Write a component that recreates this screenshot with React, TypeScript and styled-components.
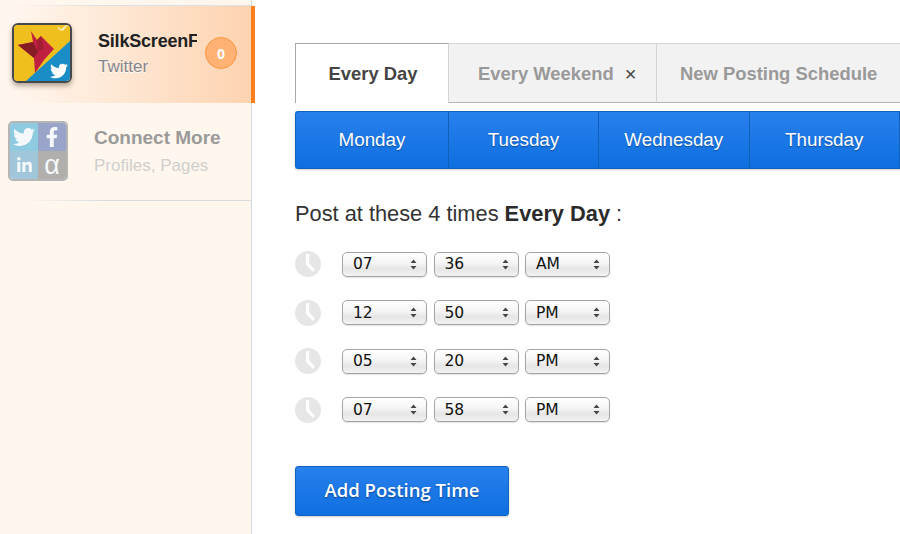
import React from "react";
import styled, { createGlobalStyle } from "styled-components";
import { FaTwitter, FaFacebookF, FaLinkedinIn } from "react-icons/fa";

const GlobalStyle = createGlobalStyle`
  html, body {
    margin: 0;
    padding: 0;
    background: #fff;
    overflow: hidden;
  }
  * {
    box-sizing: border-box;
  }
`;

const Page = styled.div`
  display: flex;
  width: 900px;
  height: 534px;
  overflow: hidden;
  font-family: "Liberation Sans", Arial, sans-serif;
`;
const Sidebar = styled.aside`
  flex: 0 0 252px;
  padding-top: 5px;
  background: #fff6ee;
  border-right: 1px solid #d5d8da;
`;
const TopLine = styled.div`
  height: 1px;
  background: linear-gradient(to right, #fff6ee 5%, #dce0e3 40%);
`;
const ActiveRow = styled.div`
  position: relative;
  display: flex;
  height: 97px;
  padding: 17px 0 0 12px;
  background: linear-gradient(to right, #fff6ee 5%, #fee6d2 50%, #fdd3b0 100%);
  &::after {
    content: "";
    position: absolute;
    top: 0;
    right: -4px;
    bottom: 0;
    width: 4px;
    background: #fd7e1f;
  }
`;
const ConnectRow = styled.div`
  display: flex;
  height: 98px;
  padding: 18px 0 0 8px;
  border-bottom: 1px solid transparent;
  border-image: linear-gradient(to right, #fff6ee 10%, #d9dde0 40%) 1;
`;
const Avatar = styled.div`
  flex: 0 0 60px;
  width: 60px;
  height: 60px;
  border: 2px solid #45494c;
  border-radius: 6px;
  overflow: hidden;
  box-shadow: 0 3px 5px rgba(90, 70, 50, 0.45);
  svg {
    display: block;
  }
`;
const IconGrid = styled.div`
  flex: 0 0 60px;
  display: grid;
  grid-template-columns: 1fr 1fr;
  grid-template-rows: 1fr 1fr;
  width: 60px;
  height: 60px;
  border: 2px solid #b5b5b3;
  border-radius: 5px;
  overflow: hidden;
`;
const IconCell = styled.div<{ $bg: string }>`
  display: flex;
  align-items: center;
  justify-content: center;
  background: ${(p) => p.$bg};
  color: #f4f8fa;
  font-size: 19px;
`;
const AlphaGlyph = styled.span`
  font-size: 27px;
  line-height: 27px;
  margin-top: 1px;
`;
const ProfileText = styled.div`
  width: 99px;
  margin: 7px 0 0 26px;
  overflow: hidden;
  white-space: nowrap;
`;
const ProfileName = styled.div`
  font-weight: 700;
  font-size: 18px;
  line-height: 22px;
  letter-spacing: -0.2px;
  color: #222;
`;
const ProfileSub = styled.div`
  margin-top: 5px;
  font-size: 17px;
  line-height: 20px;
  color: #85868a;
  text-shadow: 0 1px 0 #fff;
`;
const Badge = styled.div`
  display: flex;
  align-items: center;
  justify-content: center;
  width: 32px;
  height: 32px;
  margin: 14px 0 0 8px;
  border: 1px solid #fd963f;
  border-radius: 50%;
  background: #ffb273;
  color: #fff;
  font-family: "Open Sans", sans-serif;
  font-weight: 700;
  font-size: 14px;
`;
const ConnectText = styled.div`
  margin: 6px 0 0 26px;
  white-space: nowrap;
`;
const ConnectTitle = styled.div`
  font-weight: 700;
  font-size: 19px;
  line-height: 22px;
  color: #9a9a98;
`;
const ConnectSub = styled.div`
  margin-top: 7px;
  font-size: 17px;
  line-height: 20px;
  color: #cfcfcd;
`;

const Main = styled.main`
  flex: 1;
  min-width: 0;
  padding: 43px 0 0 43px;
  overflow: hidden;
`;
const Tabs = styled.div`
  display: flex;
  width: 700px;
  height: 60px;
`;
const Tab = styled.div<{ $active?: boolean; $width: number; $pad?: number }>`
  flex: 0 0 ${(p) => p.$width}px;
  display: flex;
  align-items: center;
  justify-content: ${(p) => (p.$pad ? "flex-start" : "center")};
  padding: 1px 0 0 ${(p) => p.$pad || 2}px;
  font-weight: 700;
  font-size: 18.4px;
  color: ${(p) => (p.$active ? "#444" : "#999")};
  background: ${(p) => (p.$active ? "#fff" : "#f2f2f2")};
  border-top: 1px solid ${(p) => (p.$active ? "#aaa" : "#d6d6d6")};
  border-left: ${(p) => (p.$active ? "1px solid #aaa" : "none")};
  border-right: 1px solid #d4d4d4;
  border-bottom: ${(p) => (p.$active ? "none" : "1px solid #b5b5b5")};
`;
const CloseMark = styled.span`
  margin-left: 11px;
  font-weight: 400;
  font-size: 20px;
  line-height: 20px;
  color: #444;
`;
const DayBar = styled.div`
  display: flex;
  width: 700px;
  height: 58px;
  margin-top: 8px;
  border: 1px solid #0f63be;
  border-right: none;
  border-radius: 3px 0 0 3px;
  background: linear-gradient(to bottom, #2880ec, #0f6fe0);
  box-shadow: 0 1px 2px rgba(0, 0, 0, 0.2);
`;
const Day = styled.div<{ $width: number }>`
  flex: 0 0 ${(p) => p.$width}px;
  display: flex;
  align-items: center;
  justify-content: center;
  border-right: 1px solid #1160b8;
  color: #fff;
  font-size: 18.8px;
  text-shadow: 0 1px 1px rgba(0, 40, 100, 0.5);
`;
const Heading = styled.div`
  margin-top: 32px;
  font-size: 21.8px;
  line-height: 26px;
  color: #333;
  b {
    color: #2b2b2b;
  }
`;
const TimeList = styled.div`
  display: flex;
  flex-direction: column;
  gap: 22.5px;
  margin-top: 24px;
`;
const TimeRow = styled.div`
  display: flex;
  align-items: center;
  gap: 6.5px;
  height: 26px;
`;
const ClockIcon = styled.svg`
  flex: 0 0 26px;
  margin-right: 14.5px;
`;
const Select = styled.div`
  display: flex;
  align-items: center;
  justify-content: space-between;
  width: 85px;
  height: 25px;
  padding: 0 9px 0 10px;
  border: 1px solid #a5a5a5;
  border-radius: 5px;
  background: linear-gradient(to bottom, #fff 0%, #f6f6f6 40%, #e6e6e6 70%, #f2f2f2 100%);
  box-shadow: 0 1px 1px rgba(0, 0, 0, 0.12);
  font-family: "DejaVu Sans", sans-serif;
  font-size: 15.5px;
  color: #111;
`;
const AddButton = styled.button`
  display: block;
  width: 214px;
  height: 50px;
  margin-top: 43px;
  padding: 0 0 3px;
  border: 1px solid #0f63be;
  border-radius: 3px;
  background: linear-gradient(to bottom, #2880ec, #0f6fe0);
  box-shadow: 0 1px 2px rgba(0, 0, 0, 0.2);
  color: #fff;
  font-family: "Open Sans", sans-serif;
  font-weight: 600;
  font-size: 18.5px;
  text-shadow: 0 1px 2px rgba(0, 40, 100, 0.6);
`;

function Logo() {
  return (
    <svg width="56" height="56" viewBox="0 0 56 56">
      <rect width="56" height="56" fill="#efbf1d" />
      <path d="M56 16 V56 H12 Z" fill="#1a8dc6" />
      <path d="M4 20 L19 17 L17 6 L23 15 L27 11 L40 24 L30 35 L21 48 L20 33 Z" fill="#c0203f" />
      <path d="M4 20 L19 17 L24 27 L20 33 Z" fill="#861c24" />
      <path d="M27 11 L30 24 L24 27 L23 15 Z" fill="#a31d32" />
      <path d="M43 1 L47 4 L52 0 L54 0 L49 6 L45 5 Z" fill="#f6e9b0" />
      <g transform="translate(36 37)">
        <FaTwitter size={18} color="#fff" />
      </g>
    </svg>
  );
}

function Clock() {
  return (
    <ClockIcon width="26" height="26" viewBox="0 0 26 26">
      <circle cx="13" cy="13" r="13" fill="#e6e6e6" />
      <path d="M11 3 H14.3 V12.3 L20 19 L17.7 20.8 L11 14 Z" fill="#fff" />
    </ClockIcon>
  );
}

function Arrows() {
  return (
    <svg width="7" height="11" viewBox="0 0 7 11">
      <path d="M3.5 0.5 L6.5 4 H0.5 Z M3.5 10.5 L0.5 7 H6.5 Z" fill="#444" />
    </svg>
  );
}

function Field({ value }: { value: string }) {
  return (
    <Select>
      {value}
      <Arrows />
    </Select>
  );
}

const times = [
  ["07", "36", "AM"],
  ["12", "50", "PM"],
  ["05", "20", "PM"],
  ["07", "58", "PM"],
];

export default function App() {
  return (
    <>
      <GlobalStyle />
      <Page>
        <Sidebar>
          <TopLine />
          <ActiveRow>
            <Avatar>
              <Logo />
            </Avatar>
            <ProfileText>
              <ProfileName>SilkScreenF</ProfileName>
              <ProfileSub>Twitter</ProfileSub>
            </ProfileText>
            <Badge>0</Badge>
          </ActiveRow>
          <ConnectRow>
            <IconGrid>
              <IconCell $bg="#8ecbe1">
                <FaTwitter size={22} />
              </IconCell>
              <IconCell $bg="#98a5c9">
                <FaFacebookF size={20} />
              </IconCell>
              <IconCell $bg="#a1c5d9">
                <FaLinkedinIn size={17} />
              </IconCell>
              <IconCell $bg="#b1afac">
                <AlphaGlyph>α</AlphaGlyph>
              </IconCell>
            </IconGrid>
            <ConnectText>
              <ConnectTitle>Connect More</ConnectTitle>
              <ConnectSub>Profiles, Pages</ConnectSub>
            </ConnectText>
          </ConnectRow>
        </Sidebar>
        <Main>
          <Tabs>
            <Tab $active $width={154}>
              Every Day
            </Tab>
            <Tab $width={208} $pad={29}>
              Every Weekend<CloseMark>×</CloseMark>
            </Tab>
            <Tab $width={338} $pad={23}>
              New Posting Schedule
            </Tab>
          </Tabs>
          <DayBar>
            <Day $width={153}>Monday</Day>
            <Day $width={150}>Tuesday</Day>
            <Day $width={150.5}>Wednesday</Day>
            <Day $width={150.5}>Thursday</Day>
          </DayBar>
          <Heading>
            Post at these 4 times <b>Every Day</b> :
          </Heading>
          <TimeList>
            {times.map((t, i) => (
              <TimeRow key={i}>
                <Clock />
                {t.map((v, j) => (
                  <Field key={j} value={v} />
                ))}
              </TimeRow>
            ))}
          </TimeList>
          <AddButton>Add Posting Time</AddButton>
        </Main>
      </Page>
    </>
  );
}
